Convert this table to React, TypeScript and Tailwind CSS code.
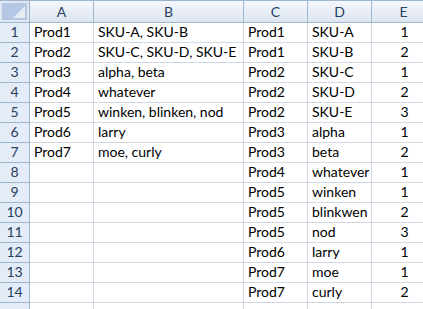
import React from "react";

const colsB: [string, string][] = [
  ["Prod1", "SKU-A, SKU-B"],
  ["Prod2", "SKU-C, SKU-D, SKU-E"],
  ["Prod3", "alpha, beta"],
  ["Prod4", "whatever"],
  ["Prod5", "winken, blinken, nod"],
  ["Prod6", "larry"],
  ["Prod7", "moe, curly"],
];

const colsC: [string, string, string][] = [
  ["Prod1", "SKU-A", "1"],
  ["Prod1", "SKU-B", "2"],
  ["Prod2", "SKU-C", "1"],
  ["Prod2", "SKU-D", "2"],
  ["Prod2", "SKU-E", "3"],
  ["Prod3", "alpha", "1"],
  ["Prod3", "beta", "2"],
  ["Prod4", "whatever", "1"],
  ["Prod5", "winken", "1"],
  ["Prod5", "blinkwen", "2"],
  ["Prod5", "nod", "3"],
  ["Prod6", "larry", "1"],
  ["Prod7", "moe", "1"],
  ["Prod7", "curly", "2"],
];

const cell =
  "h-[20px] border-r border-b border-[#d0d7e5] pl-[4px] pr-[2px] flex items-end pb-[1px] whitespace-nowrap overflow-hidden";
const hdr =
  "h-[22px] border-r border-b border-[#9eb6ce] bg-gradient-to-b from-[#f4f7fb] to-[#dde5f0] flex items-center justify-center text-[#27415f]";

export default function App() {
  const rows = [];
  for (let i = 0; i < 15; i++) {
    const b = colsB[i];
    const c = colsC[i];
    rows.push(
      <div key={i} className="flex">
        <div className="w-[30px] h-[20px] shrink-0 border-r border-b border-[#9eb6ce] bg-[#e4ecf7] flex items-end justify-center pb-[1px] text-[#27415f]">
          {i < 14 ? i + 1 : ""}
        </div>
        <div className={`${cell} w-[64px] shrink-0`}>{b ? b[0] : ""}</div>
        <div className={`${cell} w-[150px] shrink-0`}>{b ? b[1] : ""}</div>
        <div className={`${cell} w-[64px] shrink-0`}>{c ? c[0] : ""}</div>
        <div className={`${cell} w-[64px] shrink-0`}>{c ? c[1] : ""}</div>
        <div className={`${cell} w-[64px] shrink-0 justify-center pl-0 pr-0`}>{c ? c[2] : ""}</div>
      </div>
    );
  }
  return (
    <div
      className="w-[423px] h-[309px] overflow-hidden bg-white text-[14px] leading-[18px] text-black"
      style={{ fontFamily: "Lato, 'Liberation Sans', sans-serif" }}
    >
      <div className="border-t border-[#9eb6ce] flex">
        <div className="w-[30px] h-[22px] shrink-0 border-r border-b border-[#9eb6ce] bg-[#dfe7f3] p-[2px]">
          <div className="w-full h-full bg-[#b4c8e6] relative">
            <svg className="absolute right-[2px] bottom-[2px]" width="12" height="12" viewBox="0 0 12 12">
              <polygon points="12,0 12,12 0,12" fill="#e8edf4" />
            </svg>
          </div>
        </div>
        <div className={`${hdr} w-[64px] shrink-0`}>A</div>
        <div className={`${hdr} w-[150px] shrink-0`}>B</div>
        <div className={`${hdr} w-[64px] shrink-0`}>C</div>
        <div className={`${hdr} w-[64px] shrink-0`}>D</div>
        <div className={`${hdr} w-[64px] shrink-0`}>E</div>
      </div>
      {rows}
    </div>
  );
}
